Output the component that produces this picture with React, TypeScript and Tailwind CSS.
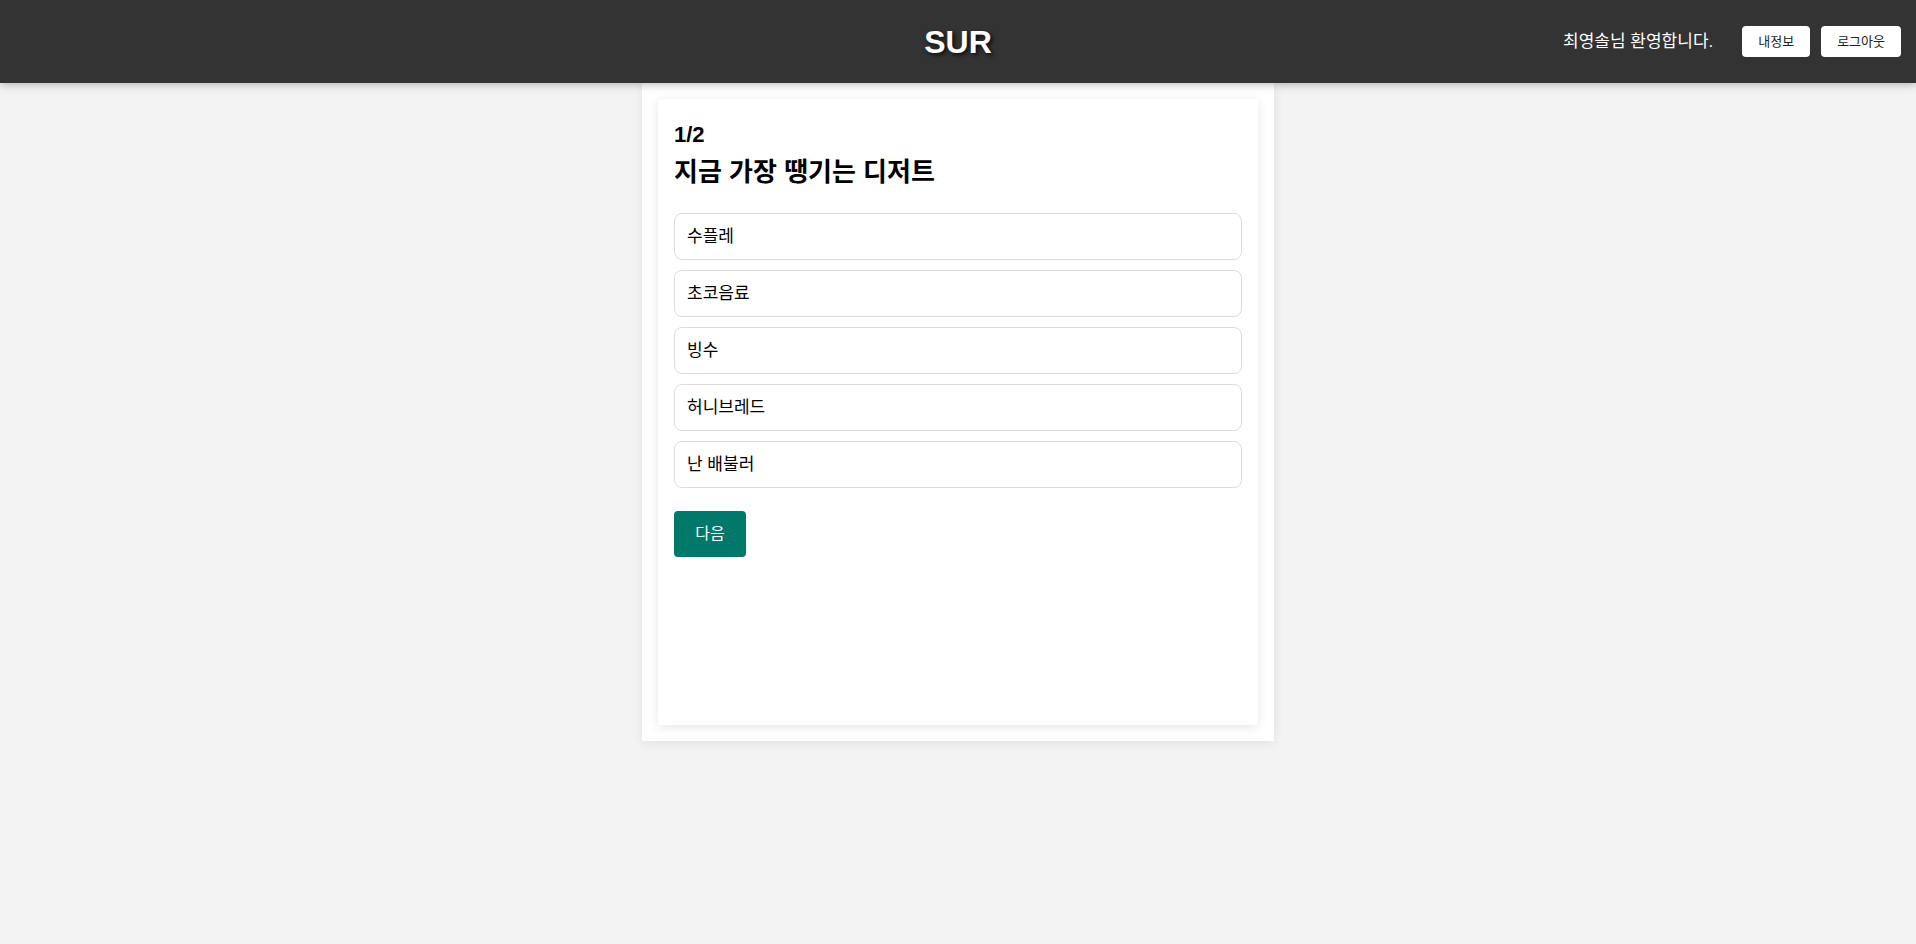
const options = ["수플레", "초코음료", "빙수", "허니브레드", "난 배불러"];

const Header = () => {
  return (
    <header className="h-[83px] w-full bg-[#333333] flex items-center relative shadow-[0_2px_8px_rgba(0,0,0,0.25)] z-10">
      <h1 className="absolute left-1/2 -translate-x-1/2 text-[32px] font-bold text-white [text-shadow:2px_2px_4px_rgba(0,0,0,0.8)]">
        SUR
      </h1>
      <div className="ml-auto flex items-center pr-[15px]">
        <span className="text-white text-[17px] mr-[29px]">최영솔님 환영합니다.</span>
        <button className="h-[31px] px-[16px] bg-white text-[#222] text-[13px] rounded-[4px] mr-[11px]">
          내정보
        </button>
        <button className="h-[31px] px-[16px] bg-white text-[#222] text-[13px] rounded-[4px]">
          로그아웃
        </button>
      </div>
    </header>
  );
};

const App = () => {
  return (
    <div className="min-h-[944px] bg-[#f3f3f3] font-['Liberation_Sans','Noto_Sans_CJK_KR',sans-serif] text-black">
      <Header />
      <div className="w-[632px] mx-auto bg-white p-4 shadow-[0_2px_10px_rgba(0,0,0,0.08)]">
        <div className="h-[626px] bg-white px-4 pt-[21px] shadow-[0_2px_10px_rgba(0,0,0,0.1)]">
          <div className="text-[22px] font-bold leading-[30px]">1/2</div>
          <div className="text-[26px] font-bold leading-[36px] mt-[4px]">지금 가장 땡기는 디저트</div>
          <div className="flex flex-col gap-[10px] mt-[23px]">
            {options.map((o) => (
              <div
                key={o}
                className="h-[47px] flex items-center px-3 border border-[#dcdcdc] rounded-[8px] text-[17px]"
              >
                {o}
              </div>
            ))}
          </div>
          <button className="mt-[23px] w-[72px] h-[46px] bg-[#00796b] text-white text-[16px] rounded-[4px]">
            다음
          </button>
        </div>
      </div>
    </div>
  );
};

export default App;
